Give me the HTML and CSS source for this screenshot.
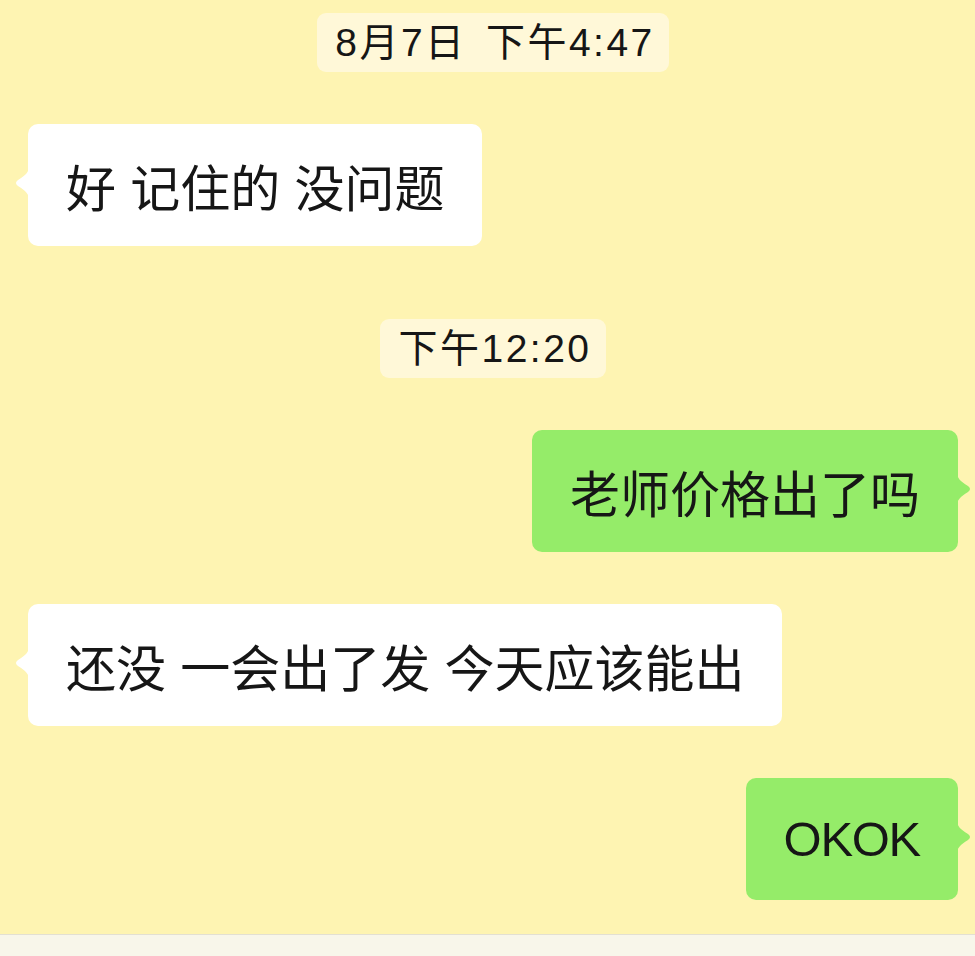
FILE: index.html
```html
<!DOCTYPE html>
<html lang="zh-CN">
<head>
  <meta charset="UTF-8">
  <title>聊天</title>
  <link rel="stylesheet" href="styles.css">
</head>
<body>

<div class="chat">

  <!--时间-->
  <div class="time">8月7日 下午4:47</div>

  <div class="msg left">
    <div class="bubble">
      <svg class="arrow" width="16" height="34" viewBox="0 0 16 34"><path d="M16 0 C16 6 13 9 5 14 Q1 17 5 20 C13 25 16 28 16 34 Z"/></svg>
      好 记住的 没问题
    </div>
  </div>

  <div class="time">下午12:20</div>

  <div class="msg right">
    <div class="bubble">
      老师价格出了吗
      <svg class="arrow" width="16" height="34" viewBox="0 0 16 34"><path d="M0 0 C0 6 3 9 11 14 Q15 17 11 20 C3 25 0 28 0 34 Z"/></svg>
    </div>
  </div>

  <div class="msg left">
    <div class="bubble">
      <svg class="arrow" width="16" height="34" viewBox="0 0 16 34"><path d="M16 0 C16 6 13 9 5 14 Q1 17 5 20 C13 25 16 28 16 34 Z"/></svg>
      还没 一会出了发 今天应该能出
    </div>
  </div>

  <div class="msg right">
    <div class="bubble latin">
      OKOK
      <svg class="arrow" width="16" height="34" viewBox="0 0 16 34"><path d="M0 0 C0 6 3 9 11 14 Q15 17 11 20 C3 25 0 28 0 34 Z"/></svg>
    </div>
  </div>

</div>

<!--底部输入栏-->
<div class="bar"></div>

</body>
</html>
```

FILE: styles.css
```css
* {
  margin: 0;
  padding: 0;
  box-sizing: border-box;
}

html,
body {
  height: 100%;
}

body {
  background-color: #fef4b2;
  font-family: "Noto Sans CJK SC", "Liberation Sans", sans-serif;
  color: #161616;
  overflow: hidden;
  display: flex;
  flex-direction: column;
}

.chat {
  display: flex;
  flex-direction: column;
  gap: 52px;
  padding: 13px 17px 34px 28px;
}

/*时间标签*/
.time {
  align-self: center;
  height: 59px;
  line-height: 59px;
  padding: 0 14px 0 18px;
  font-family: "Liberation Sans", "Noto Sans CJK SC", sans-serif;
  font-size: 39px;
  letter-spacing: 2.5px;
  word-spacing: 6px;
  background-color: #fff8d8;
  border-radius: 9px;
}

.msg + .time {
  margin-top: 21px;
}

.msg {
  display: flex;
}

.msg.right {
  justify-content: flex-end;
}

.bubble {
  position: relative;
  height: 122px;
  line-height: 122px;
  padding: 0 38px 0 38px;
  font-size: 50px;
  word-spacing: 3px;
  white-space: nowrap;
  border-radius: 10px;
  background-color: #fff;
}

.right .bubble {
  background-color: #95ec69;
}

.latin {
  font-family: "Liberation Sans", sans-serif;
  letter-spacing: -1.3px;
  font-size: 49px;
}

/*气泡小尖角*/
.arrow {
  position: absolute;
  top: 42px;
  fill: #fff;
}

.left .arrow {
  left: -15px;
}

.right .arrow {
  right: -15px;
  fill: #95ec69;
}

.bar {
  flex: 1;
  background-color: #f8f6ea;
  border-top: 1px solid #e3e0d2;
}
```
